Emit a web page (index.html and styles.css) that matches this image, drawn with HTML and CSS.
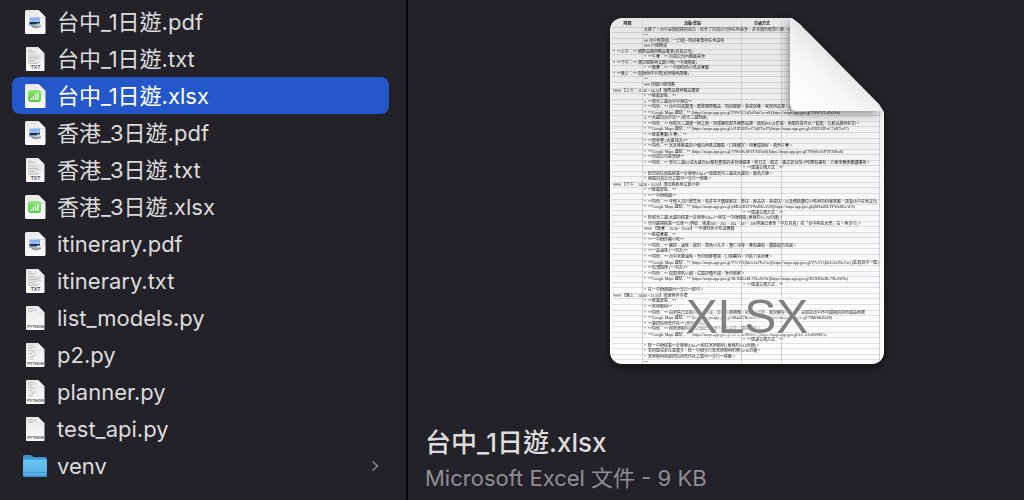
FILE: index.html
```html
<!DOCTYPE html>
<html lang="zh-Hant">
<head>
<meta charset="utf-8">
<title>台中_1日遊.xlsx</title>
<link rel="stylesheet" href="styles.css">
</head>
<body>
<svg class="defs" aria-hidden="true">
  <defs>
    <linearGradient id="paper" x1="0" y1="0" x2="0" y2="1"><stop offset="0" stop-color="#e9e9e9"/><stop offset="1" stop-color="#fafafa"/></linearGradient>
    <linearGradient id="flap" x1="0" y1="1" x2="1" y2="0"><stop offset="0" stop-color="#fff"/><stop offset=".5" stop-color="#eee"/><stop offset="1" stop-color="#ccc"/></linearGradient>
    <linearGradient id="blue" x1="0" y1="0" x2="0" y2="1"><stop offset="0" stop-color="#6cc3f3"/><stop offset="1" stop-color="#52aee6"/></linearGradient>
    <linearGradient id="green" x1="0" y1="0" x2="0" y2="1"><stop offset="0" stop-color="#8be878"/><stop offset="1" stop-color="#52c943"/></linearGradient>
    <linearGradient id="sky" x1="0" y1="0" x2="0" y2="1"><stop offset="0" stop-color="#82aee9"/><stop offset="1" stop-color="#b4cff0"/></linearGradient>
  </defs>
  <symbol id="page" viewBox="0 0 24 26">
    <path d="M3.500 1H15.500L22.500 8V23.500Q22.500 25 21 25H3.500Q2 25 2 23.500V2.500Q2 1 3.500 1Z" fill="url(#paper)"/>
    <path d="M15.500 1V6.500Q15.500 8 17 8H22.500Z" fill="url(#flap)"/>
    <path d="M15.500 6.500Q15.500 8 17 8H22.500V9H17Q15 9 15 7Z" fill="#bbb" opacity=".5"/>
  </symbol>
  <symbol id="pdf" viewBox="0 0 24 26">
    <use href="#page"/>
    <path d="M6.500 8.500H17V17H6.500Z" fill="url(#sky)"/>
    <path d="M6.500 13H17V15.500H6.500Z" fill="#20324d"/>
    <path d="M6.500 15.500H17V17H6.500Z" fill="#8faac6"/>
    <path d="M9 17L13 15.500L17 15.500L18 18L12 19.500L8 18Z" fill="#b9bdc2"/>
    <path d="M9 17.500L14 18.500L18 17" fill="none" stroke="#777c83"/>
    <circle cx="15.500" cy="15.500" r="1.500" fill="#d4d4d4"/>
  </symbol>
  <symbol id="lines" viewBox="0 0 24 26">
    <path d="M3.500 1H15L21.500 7.500V24Q21.500 25 20.500 25H4Q3 25 3 24V1.500Z" fill="url(#paper)"/>
    <path d="M15 1V7.500H21.500Z" fill="url(#flap)"/>
    <path d="M15 7.500H21.500V8.500H14.500V2Z" fill="#aaa" opacity=".3"/>
  </symbol>
  <symbol id="txt" viewBox="0 0 24 26">
    <use href="#lines"/>
    <path d="M5 4H9M5 5.500H12M5 8H13M5 10H18M5 11.500H16M5 13H18M5 14.500H12M5 16H17M5 17.500H15" stroke="#b5b5b5" stroke-width=".7"/>
    <text x="12.500" y="23" text-anchor="middle" class="tag">TXT</text>
  </symbol>
  <symbol id="py" viewBox="0 0 24 26">
    <use href="#lines"/>
    <path d="M5 3.500H10M5 5H13M5 6.500H9" stroke="#bbb" stroke-width=".7"/>
    <text x="12.500" y="23" text-anchor="middle" class="tag tag-small">PYTHON</text>
  </symbol>
  <symbol id="pycode" viewBox="0 0 24 26">
    <use href="#py"/>
    <path d="M5 8.500H11M7 10H13M5 11.500H9M8 13H14M8 14.500H12M5 16H11M7 17.500H10" stroke="#bdbdbd" stroke-width=".7"/>
  </symbol>
  <symbol id="xlsx" viewBox="0 0 24 26">
    <use href="#page"/>
    <rect x="5" y="7" width="13" height="12" rx="3" fill="url(#green)"/>
    <path d="M8 17V15M10.300 17V13M12.600 17V11M15 17V9.500" stroke="#fff" stroke-width="1.300"/>
  </symbol>
  <symbol id="folder" viewBox="0 0 24 26">
    <path d="M0 3.500Q0 2 1.500 2H8L10.500 4H22.500Q24 4 24 5.500V12H0Z" fill="#3b94cd"/>
    <path d="M0 8Q0 6.500 1.500 6.500H22.500Q24 6.500 24 8V22Q24 24 22.500 24H1.500Q0 24 0 22Z" fill="url(#blue)"/>
    <path d="M0 19H24V20H0Z" fill="#479dd5"/>
    <path d="M0 22.500H24Q23.500 24 22.500 24H1.500Q.500 24 0 22.500Z" fill="#3d8fc6"/>
  </symbol>
</svg>
<main class="finder">
  <nav class="files" aria-label="檔案">
    <a class="file" href="#"><svg class="icon"><use href="#pdf"/></svg><span>台中_1日遊.pdf</span></a>
    <a class="file" href="#"><svg class="icon"><use href="#txt"/></svg><span>台中_1日遊.txt</span></a>
    <a class="file selected" href="#" aria-current="true"><svg class="icon"><use href="#xlsx"/></svg><span>台中_1日遊.xlsx</span></a>
    <a class="file" href="#"><svg class="icon"><use href="#pdf"/></svg><span>香港_3日遊.pdf</span></a>
    <a class="file" href="#"><svg class="icon"><use href="#txt"/></svg><span>香港_3日遊.txt</span></a>
    <a class="file" href="#"><svg class="icon"><use href="#xlsx"/></svg><span>香港_3日遊.xlsx</span></a>
    <a class="file" href="#"><svg class="icon"><use href="#pdf"/></svg><span>itinerary.pdf</span></a>
    <a class="file" href="#"><svg class="icon"><use href="#txt"/></svg><span>itinerary.txt</span></a>
    <a class="file" href="#"><svg class="icon"><use href="#py"/></svg><span>list_models.py</span></a>
    <a class="file" href="#"><svg class="icon"><use href="#pycode"/></svg><span>p2.py</span></a>
    <a class="file" href="#"><svg class="icon"><use href="#pycode"/></svg><span>planner.py</span></a>
    <a class="file" href="#"><svg class="icon"><use href="#py"/></svg><span>test_api.py</span></a>
    <a class="file" href="#"><svg class="icon"><use href="#folder"/></svg><span>venv</span><svg class="chevron" viewBox="0 0 8 12"><path d="M1.500 1.500L6.500 6L1.500 10.500" fill="none" stroke="#8a8a8e" stroke-width="1.500"/></svg></a>
  </nav>
  <section class="preview">
    <div class="document">
      <div class="sheet">
        <table>
          <tbody>
            <tr class="head"><th>時間<th>活動/景點<th>交通方式
            <tr><td><td>太棒了！台中是個很棒的城市，結合了百貨公司與在地美食，非常適合輕鬆行程，以下為您設計
            <tr><td><td>---
            <tr><td><td>## 台中輕鬆遊：一日遊 - 時尚都會與在地滋味
            <tr><td><td>### 行程概覽
            <tr><td>*&ensp;**上午：** 國際品牌與精品饗宴(百貨公司)
            <tr><td><td>*&ensp;**午餐：** 百貨公司內精緻美食
            <tr><td>*&ensp;**下午：** 潮流服飾與文創小物(一中街商圈)
            <tr><td><td>*&ensp;**晚餐：** 一中街特色小吃或餐廳
            <tr><td>*&ensp;**晚上：** 逛街與伴手禮(宮原眼科周邊)
            <tr><td><td>---
            <tr><td><td>### 詳細行程規劃
            <tr><td>#### 【上午：11:30 - 14:30】國際品牌與精品饗宴
            <tr><td><td>*&ensp;**推薦景點：**
            <tr><td><td>1. **新光三越台中中港店**
            <tr><td><td>*&ensp;**特色：** 台中百貨龍頭，匯聚國際精品、時尚服飾、美妝保養、家居用品等，品牌齊全
            <tr><td><td>*&ensp;**Google Maps 連結：** [https://maps.app.goo.gl/T8W5CLtDaFkbGwvs8](https://maps.app.goo.gl/T8W5CLtDaFkb)
            <tr><td><td>2. **大遠百台中店** (新光三越對面)
            <tr><td><td>*&ensp;**特色：** 與新光三越僅一街之隔，同樣擁有眾多國際品牌，還有IMAX影城，兩間百貨可以一起逛，比較品牌與折扣。
            <tr><td><td>*&ensp;**Google Maps 連結：** [https://maps.app.goo.gl/cHJD5HFwC7yKTwJ7](https://maps.app.goo.gl/cHJD5HFwC7yKTwJ7)
            <tr><td><td>*&ensp;**推薦餐廳(午餐)：**
            <tr><td><td>*&ensp;**鼎泰豐 (大遠百店)**
            <tr><td><td>*&ensp;**特色：** 米其林推薦的小籠包與各式麵點，口味穩定，用餐環境好，適合午餐。
            <tr><td><td>*&ensp;**Google Maps 連結：** [https://maps.app.goo.gl/79WfRvJiPYF36Rn8](https://maps.app.goo.gl/79WfRvJiPYF36Rn8)
            <tr><td><td>*&ensp;**百貨公司美食街**
            <tr><td><td>*&ensp;**特色：** 新光三越B2或大遠百B2都有豐富的美食街選擇，從日式、韓式、義式到台灣小吃應有盡有，方便用餐後繼續購物。
            <tr><td><td><td>*&ensp;**建議交通方式：**
            <tr><td><td>*&ensp;從您的住宿點搭乘**計程車/Uber**直達新光三越或大遠百，最為方便。
            <tr><td><td>*&ensp;兩間百貨公司之間可**步行**移動。
            <tr><td>#### 【下午：14:30 - 16:30】潮流服飾與文創小物
            <tr><td><td>*&ensp;**推薦景點：**
            <tr><td><td>*&ensp;**一中街商圈**
            <tr><td><td>*&ensp;**特色：** 年輕人流行聚集地，有許多平價服飾店、鞋店、飾品店、美妝店，以及傳統攤位小吃與特色咖啡廳，感受台中在地文化
            <tr><td><td>*&ensp;**Google Maps 連結：** [https://maps.app.goo.gl/pMLhiKLYPWaBEsAV8](https://maps.app.goo.gl/pMLhiKLYPWaBEsAV8)
            <tr><td><td><td>*&ensp;**建議交通方式：**
            <tr><td><td>*&ensp;從新光三越/大遠百搭乘**計程車/Uber**前往一中街商圈 (車程約15-20分鐘)。
            <tr><td><td>*&ensp;也可選擇搭乘**公車** (例如：搭乘300、303、304、307、308等路公車至「中友百貨」或「台中科技大學」站，再步行)。
            <tr><td><td>#### 【晚餐：16:30 - 20:00】一中街特色小吃或餐廳
            <tr><td><td>*&ensp;**推薦餐廳：**
            <tr><td><td>*&ensp;**一中街炸雞小吃**
            <tr><td><td>*&ensp;**特色：** 雞排、滷味、飲料、章魚小丸子、豐仁冰等，應有盡有，體驗夜市氛圍。
            <tr><td><td>*&ensp;**一品滷味 (一中店)**
            <tr><td><td>*&ensp;**特色：** 台中老牌滷味，食材新鮮豐富，口味獨特，可依下來用餐。
            <tr><td><td>*&ensp;**Google Maps 連結：** [https://maps.app.goo.gl/Y7eV1Qbb1c2aJTwGw](https://maps.app.goo.gl/Y7eV1Qbb1c2aJTwGw) (此為其中一間)
            <tr><td><td>*&ensp;**石頭燒烤 (一中店)**
            <tr><td><td>*&ensp;**特色：** 如果想吃火鍋，這間評價不錯，食材新鮮。
            <tr><td><td>*&ensp;**Google Maps 連結：** [https://maps.app.goo.gl/RLXBEzBL79LzWr9z](https://maps.app.goo.gl/RLXBEzBL79LzWr9z)
            <tr><td><td><td>*&ensp;**建議交通方式：**
            <tr><td><td>*&ensp;在一中街商圈內**步行**即可。
            <tr><td>#### 【晚上：20:00 - 21:30】逛街與伴手禮
            <tr><td><td>*&ensp;**推薦景點：**
            <tr><td><td>*&ensp;**宮原眼科**
            <tr><td><td>*&ensp;**特色：** 由老舊日式眼科改建而成，建築外觀典雅，販售冰淇淋、鳳梨酥等伴手禮，是到訪台中不可錯過的特色甜品地標
            <tr><td><td>*&ensp;**Google Maps 連結：** [https://maps.app.goo.gl/dR4aZ7BzvhM3LhJ8](https://maps.app.goo.gl/79MrMhZhZ8)
            <tr><td><td>*&ensp;**第四信用合作社** (宮原眼科旁)
            <tr><td><td>*&ensp;**特色：** 與宮原眼科同為日出集團旗下的冰品店，環境獨特。
            <tr><td><td>*&ensp;**Google Maps 連結：** [https://maps.app.goo.gl/kJCLJw8W89A](https://maps.app.goo.gl/kJCwJwRW89A)
            <tr><td><td><td>*&ensp;**建議交通方式：**
            <tr><td><td>*&ensp;從一中街搭乘**計程車/Uber**前往宮原眼科 (車程約5-10分鐘)。
            <tr><td><td>*&ensp;若時間或非在意散步，從一中街步行至宮原眼科約需15-20分鐘。
            <tr><td><td>*&ensp;宮原眼科與第四信用合作社之間可**步行**移動。
            <tr><td><td>---
          </tbody>
        </table>
        <span class="kind">XLSX</span>
      </div>
      <svg class="fold" viewBox="0 0 94 94" aria-hidden="true">
        <defs>
          <linearGradient id="curl" x1="0" y1="1" x2=".6" y2=".3"><stop offset="0" stop-color="#fff"/><stop offset=".55" stop-color="#f6f6f6"/><stop offset="1" stop-color="#dedede"/></linearGradient>
        </defs>
        <path d="M0 0Q4 1 8 5L87 85Q91 89 92 93H7Q0 93 0 86Z" fill="url(#curl)"/>
      </svg>
    </div>
    <h1 class="name">台中_1日遊.xlsx</h1>
    <p class="info">Microsoft Excel 文件 - 9 KB</p>
  </section>
</main>
</body>
</html>
```
FILE: styles.css
```css
* {
  box-sizing: border-box;
}

body {
  margin: 0;
  background: #232228;
  color: #dcdcdc;
  font-family: Inter, "Noto Sans CJK TC", sans-serif;
  font-size: 22px;
}

.defs {
  position: absolute;
  width: 0;
  height: 0;
}

.tag {
  font: bold 5px "Liberation Sans", sans-serif;
  fill: #555;
}

.tag-small {
  font-size: 4px;
}

.finder {
  display: grid;
  grid-template-columns: 408px 1fr;
  min-height: 100vh;
  overflow: hidden;
}

.files {
  padding: 3px 17px 3px 12px;
  border-right: 2px solid #060607;
}

.file {
  display: flex;
  align-items: center;
  gap: 10px;
  height: 37px;
  padding: 0 10px 0 11px;
  border-radius: 8px;
  color: inherit;
  line-height: 36px;
  text-decoration: none;
  white-space: nowrap;
}

.selected {
  background: #2458ca;
  color: #fff;
}

.icon {
  flex: none;
  width: 24px;
  height: 26px;
}

.chevron {
  width: 8px;
  height: 12px;
  margin-left: auto;
}

.preview {
  min-width: 0;
  padding: 18px 0 0 17px;
}

.document {
  position: relative;
  width: 274px;
  margin-left: 185px;
  filter: drop-shadow(0 3px 5px #0008);
}

.sheet {
  height: 346px;
  padding-top: 3px;
  overflow: hidden;
  border-radius: 12px;
  background: linear-gradient(#e6e6e6, #f7f7f7 50%, #fdfdfd);
  clip-path: polygon(0 0, 182px 0, 190px 6px, 269px 86px, 274px 94px, 274px 100%, 0 100%);
}

.sheet table,
.sheet tbody {
  display: grid;
  grid-template-columns: 100%;
  height: 344px;
}

.sheet table {
  margin: 0 4px 0 2px;
  color: #222;
  font: 4px/5px "Liberation Serif", "Noto Sans CJK TC", serif;
  background:
    linear-gradient(#d0d3dc, #d0d3dc) 30px 0 / 1px 100% no-repeat,
    linear-gradient(#d0d3dc, #d0d3dc) 129px 0 / 1px 100% no-repeat,
    linear-gradient(#d0d3dc, #d0d3dc) 169px 0 / 1px 100% no-repeat,
    linear-gradient(#d0d3dc, #d0d3dc) 100% 0 / 1px 100% no-repeat;
}

.sheet tbody {
  grid-auto-rows: 1fr;
}

.sheet tr {
  display: grid;
  grid-template-columns: 31px 99px 40px 1fr;
  min-height: 0;
  box-shadow: 0 1px #0000001c;
}

.sheet td,
.sheet th {
  min-width: 0;
  padding: 0 1px;
  white-space: nowrap;
}

.kind {
  position: absolute;
  top: 272px;
  left: 0;
  width: 100%;
  color: #808080;
  font: 48px/54px "Liberation Sans", sans-serif;
  text-align: center;
  text-shadow: 0 0 4px #fff, 0 0 8px #fff;
}

.fold {
  position: absolute;
  top: 0;
  right: 0;
  width: 94px;
  height: 94px;
  filter: drop-shadow(-2px 3px 5px #0006);
}

.name {
  margin: 61px 0 0;
  font-size: 26px;
  font-weight: 500;
  line-height: 36px;
}

.info {
  margin: 0;
  color: #8f8f93;
  line-height: 34px;
}
```
